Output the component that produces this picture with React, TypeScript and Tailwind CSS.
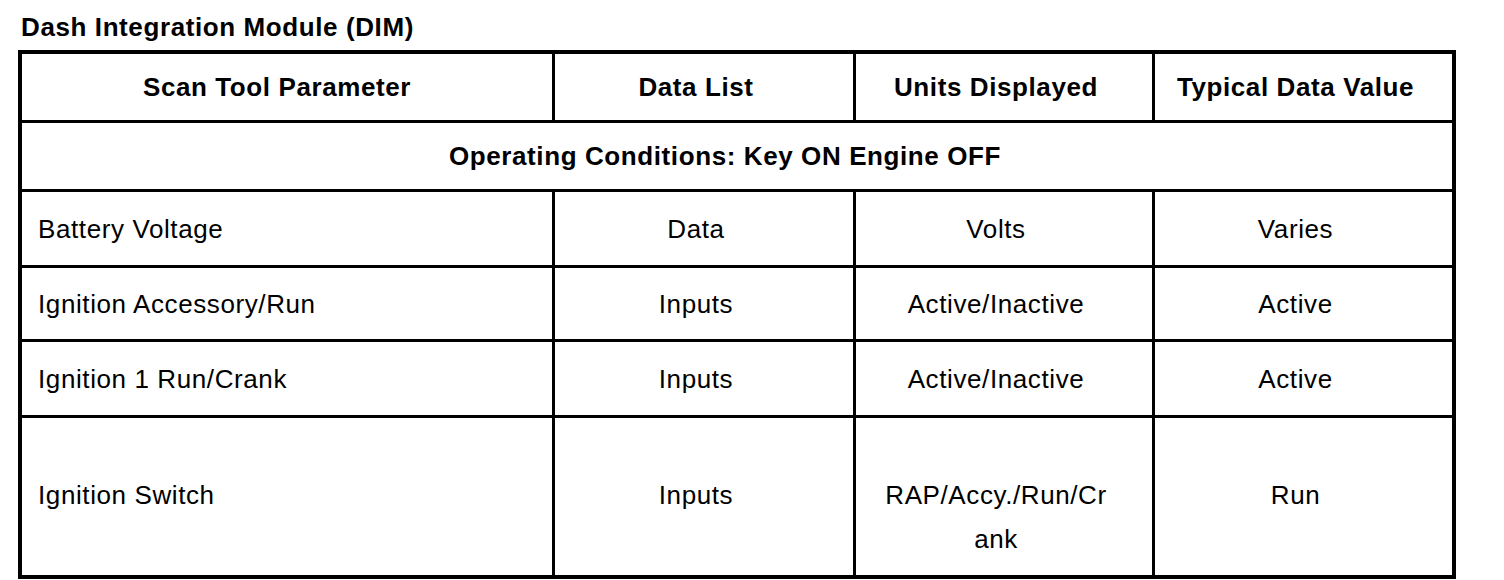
const rows = [
  { param: 'Battery Voltage', list: 'Data', units: 'Volts', value: 'Varies', h: 'h-[73px]' },
  { param: 'Ignition Accessory/Run', list: 'Inputs', units: 'Active/Inactive', value: 'Active', h: 'h-[71px]' },
  { param: 'Ignition 1 Run/Crank', list: 'Inputs', units: 'Active/Inactive', value: 'Active', h: 'h-[73px]' },
]

export default function App() {
  return (
    <div
      className="w-[1504px] h-[580px] bg-white text-black text-[26px] tracking-[0.6px] overflow-hidden"
      style={{ fontFamily: '"Liberation Sans", Arial, sans-serif' }}
    >
      <div className="pt-[12px] pl-[21px] leading-[30px] font-bold">Dash Integration Module (DIM)</div>

      <div className="mt-[8px] ml-[18px] w-[1438px] grid grid-cols-[530px_298px_296px_297px] gap-[3px] p-[4px] bg-black leading-[30px]">
        {/* header */}
        <div className="h-[66px] bg-white flex items-center justify-center pr-5 font-bold">Scan Tool Parameter</div>
        <div className="bg-white flex items-center justify-center pr-4 font-bold">Data List</div>
        <div className="bg-white flex items-center justify-center pr-4 font-bold">Units Displayed</div>
        <div className="bg-white flex items-center justify-center pr-4 font-bold">Typical Data Value</div>

        {/* operating conditions */}
        <div className="col-span-4 h-[66px] bg-white flex items-center justify-center pr-6 font-bold">
          Operating Conditions: Key ON Engine OFF
        </div>

        {rows.map((r) => (
          <div key={r.param} className="contents">
            <div className={`${r.h} bg-white flex items-center pl-4`}>{r.param}</div>
            <div className="bg-white flex items-center justify-center pr-4">{r.list}</div>
            <div className="bg-white flex items-center justify-center pr-4">{r.units}</div>
            <div className="bg-white flex items-center justify-center pr-4">{r.value}</div>
          </div>
        ))}

        {/* ignition switch */}
        <div className="h-[157px] bg-white flex items-center pl-4 pb-[3px]">Ignition Switch</div>
        <div className="bg-white flex items-center justify-center pr-4 pb-[3px]">Inputs</div>
        <div className="bg-white pt-[55px] pr-4 text-center leading-[44px]">
          RAP/Accy./Run/Cr
          <br />
          ank
        </div>
        <div className="bg-white flex items-center justify-center pr-4 pb-[3px]">Run</div>
      </div>
    </div>
  )
}
